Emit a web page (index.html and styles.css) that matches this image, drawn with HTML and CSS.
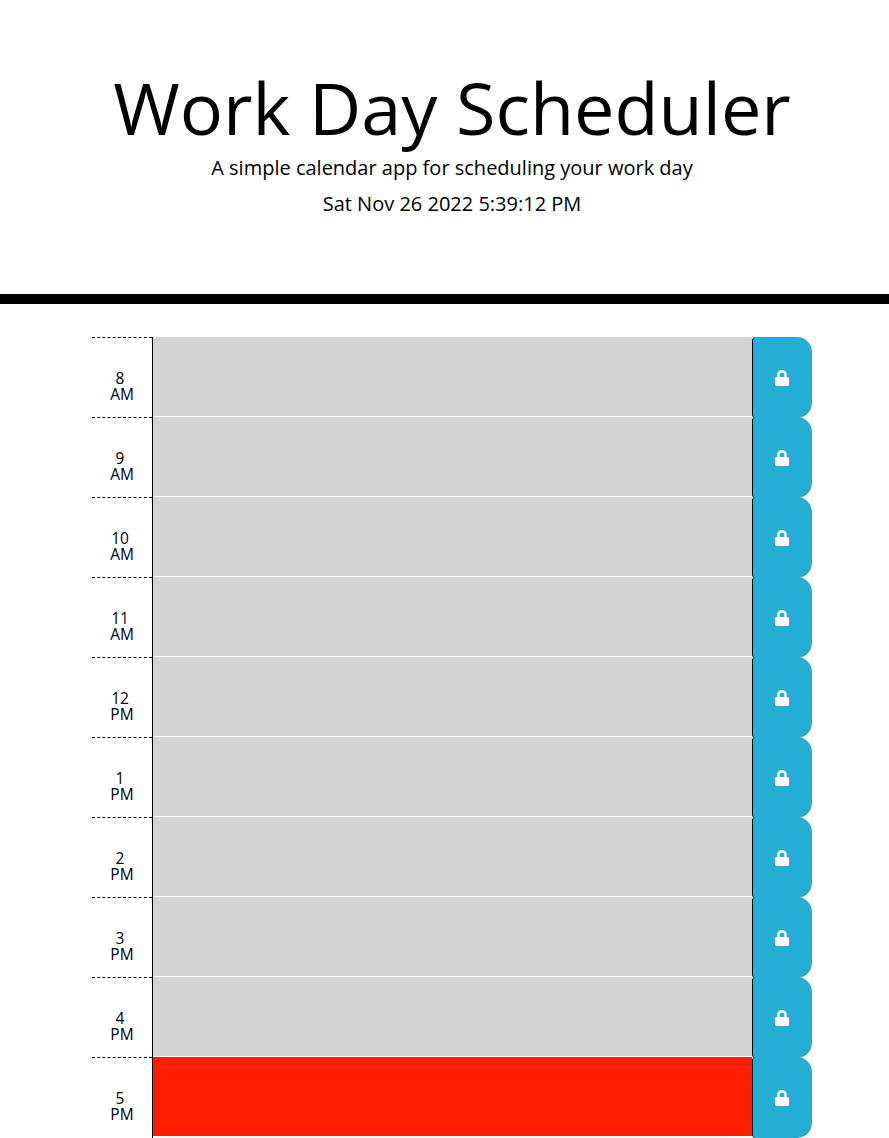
FILE: index.html
```
<!DOCTYPE html>
<html lang="en">
<head>
<meta charset="utf-8">
<title>Work Day Scheduler</title>
<link rel="stylesheet" href="styles.css">
</head>
<body>
<svg class="sprite" aria-hidden="true"><symbol id="lock" viewBox="0 0 448 512"><path fill="currentColor" d="M400 224h-24v-72C376 68.200 307.800 0 224 0S72 68.200 72 152v72H48c-26.500 0-48 21.500-48 48v192c0 26.500 21.500 48 48 48h352c26.500 0 48-21.500 48-48V272c0-26.500-21.500-48-48-48zm-104 0H152v-72c0-39.700 32.300-72 72-72s72 32.300 72 72v72z"/></symbol></svg>
<header class="jumbotron">
<h1 class="title">Work Day Scheduler</h1>
<p class="lead">A simple calendar app for scheduling your work day</p>
<p class="lead">Sat Nov 26 2022 5:39:12 PM</p>
</header>
<main class="container" id="schedule"></main>
<script src="script.js"></script>
</body>
</html>
```
FILE: styles.css
```
* {
  box-sizing: border-box;
}

body {
  margin: 0;
  height: 1138px;
  overflow: hidden;
  background: #fff;
  color: #000;
  font-family: "Open Sans", sans-serif;
  font-size: 16px;
}

.sprite {
  display: none;
}

.jumbotron {
  width: 904px;
  height: 304px;
  padding: 64px 0 0;
  border-bottom: 10px solid #000;
  text-align: center;
}

.title {
  margin: 0;
  font-size: 72px;
  font-weight: 400;
  line-height: 86px;
  white-space: nowrap;
}

.lead {
  margin: 0;
  padding: 3px 0;
  font-size: 20px;
  line-height: 30px;
}

.container {
  width: 720px;
  margin: 33px 0 0 92px;
}

.row {
  display: grid;
  grid-template-columns: 60px 600px 60px;
  height: 80px;
}

.hour {
  border-top: 1px dashed #000;
  padding-top: 32px;
  font-size: 15.5px;
  line-height: 16px;
  text-align: center;
}

.hour span {
  display: block;
}

.number {
  padding-right: 4px;
}

.description {
  height: 81px;
  border-left: 1px solid #000;
  background: linear-gradient(#fff, #fff) 0 79px / 100% 2px no-repeat #d3d3d3;
}

.present {
  background-color: #ff1e00;
}

.save {
  display: flex;
  align-items: center;
  justify-content: center;
  height: 81px;
  padding: 0 2px 0 0;
  border: 0;
  border-left: 1px solid #000;
  border-radius: 4px 15px 15px 4px;
  background: #24aed6;
  color: #fff;
}

.lock {
  width: 14px;
  height: 16px;
}
```
FILE: script.js
```
const hours = ["8 AM", "9 AM", "10 AM", "11 AM", "12 PM", "1 PM", "2 PM", "3 PM", "4 PM", "5 PM"];
const currentHour = "5 PM";

document.getElementById("schedule").innerHTML = hours.map((hour) => {
  const [number, period] = hour.split(" ");
  return `<div class="row">
    <div class="hour"><span class="number">${number}</span><span class="period">${period}</span></div>
    <div class="description${hour === currentHour ? " present" : ""}"></div>
    <button class="save" aria-label="Save"><svg class="lock"><use href="#lock"/></svg></button>
  </div>`;
}).join("");
```
